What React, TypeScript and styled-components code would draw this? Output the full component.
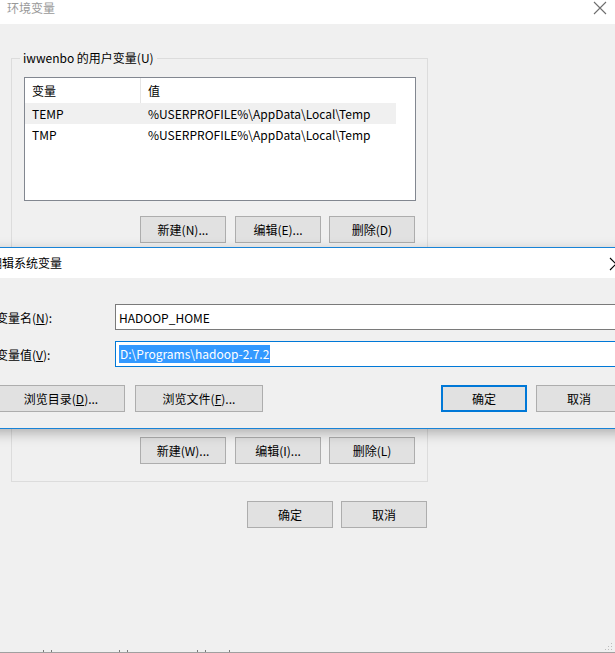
import React from 'react';
import styled, { createGlobalStyle } from 'styled-components';

const GlobalStyle = createGlobalStyle`
  html, body {
    margin: 0;
    padding: 0;
    background: #f0f0f0;
    overflow: hidden;
  }
  * {
    box-sizing: border-box;
  }
`;

const FONT = '"Microsoft YaHei", "Noto Sans CJK SC", sans-serif';

const Window = styled.div`
  position: relative;
  width: 615px;
  height: 653px;
  display: flex;
  flex-direction: column;
  background: #f0f0f0;
  font-family: ${FONT};
  font-size: 12px;
  color: #000;
  overflow: hidden;
`;

const TitleBar = styled.div<{ $active?: boolean }>`
  height: ${({ $active }) => ($active ? '30px' : '24px')};
  flex-shrink: 0;
  display: flex;
  align-items: ${({ $active }) => ($active ? 'center' : 'flex-start')};
  justify-content: space-between;
  padding: ${({ $active }) => ($active ? '0 0 0 7px' : '0 8px 0 7px')};
  background: #fff;
  color: ${({ $active }) => ($active ? '#000' : '#999')};
  line-height: 16px;
`;

const CloseBox = styled.span<{ $right?: number }>`
  display: block;
  padding-top: 1px;
  padding-right: ${({ $right }) => $right ?? 0}px;
`;

const CloseGlyph = styled.svg`
  display: block;
`;

const Body = styled.div`
  flex: 1;
  display: flex;
  flex-direction: column;
  padding: 26px 0 0 11px;
`;

const Column = styled.div`
  width: 417px;
  display: flex;
  flex-direction: column;
`;

const GroupBox = styled.fieldset<{ $padBottom: number; $gapTop?: number }>`
  margin: ${({ $gapTop }) => $gapTop ?? 0}px 0 0 0;
  padding: 11px 12px ${({ $padBottom }) => $padBottom}px 12px;
  border: 1px solid #dcdcdc;
  min-width: 0;
  display: flex;
  flex-direction: column;
`;

const Legend = styled.legend`
  padding: 0 3px;
  margin-left: -4px;
  line-height: 16px;
  font-size: 12px;
`;

const ListBox = styled.div<{ $height: number }>`
  height: ${({ $height }) => $height}px;
  margin-right: -1px;
  border: 1px solid #828790;
  background: #fff;
  padding-right: 19px;
`;

const ListHeader = styled.div`
  display: grid;
  grid-template-columns: 116px 1fr;
  height: 25px;
  align-items: center;
`;

const HeaderCell = styled.div<{ $divider?: boolean }>`
  height: 100%;
  display: flex;
  align-items: center;
  padding-left: 7px;
  border-right: ${({ $divider }) => ($divider ? '1px solid #e5e5e5' : 'none')};
`;

const ListRow = styled.div<{ $selected?: boolean }>`
  display: grid;
  grid-template-columns: 116px 1fr;
  height: 21px;
  align-items: center;
  background: ${({ $selected }) => ($selected ? '#f0f0f0' : 'transparent')};
`;

const Cell = styled.div`
  padding-left: 7px;
  white-space: nowrap;
`;

const ButtonRow = styled.div<{ $top: number; $right?: number }>`
  display: flex;
  justify-content: flex-end;
  gap: 8px;
  margin-top: ${({ $top }) => $top}px;
  padding-right: ${({ $right }) => $right ?? 0}px;
`;

const Button = styled.button<{ $width?: number; $default?: boolean }>`
  width: ${({ $width }) => $width ?? 86}px;
  height: 27px;
  flex-shrink: 0;
  margin: 0;
  padding: 0;
  font-family: ${FONT};
  font-size: 12px;
  color: #000;
  background: #e1e1e1;
  border: ${({ $default }) => ($default ? '2px solid #0078d7' : '1px solid #adadad')};
  border-radius: 0;
  line-height: 16px;
`;

const Underline = styled.span`
  text-decoration: underline;
`;

/* edit dialog floating over the main window */
const Dialog = styled.div`
  position: absolute;
  top: 247px;
  left: -18px;
  width: 658px;
  display: flex;
  flex-direction: column;
  border: 1px solid #1883d7;
  background: #f0f0f0;
  box-shadow: 0 4px 12px rgba(0, 0, 0, 0.28);
`;

const DialogBody = styled.div`
  display: flex;
  flex-direction: column;
  padding: 26px 13px 16px 13px;
`;

const Field = styled.div<{ $top?: number }>`
  display: grid;
  grid-template-columns: 119px 1fr;
  align-items: center;
  margin-top: ${({ $top }) => $top ?? 0}px;
`;

const TextBox = styled.div<{ $focused?: boolean }>`
  height: 26px;
  display: flex;
  align-items: center;
  padding-left: 3px;
  background: #fff;
  border: 1px solid ${({ $focused }) => ($focused ? '#0078d7' : '#7a7a7a')};
  white-space: nowrap;
`;

const Selection = styled.span`
  background: #3399ff;
  color: #fff;
  padding: 0 1px 1px 1px;
  line-height: 17px;
`;

const DialogButtons = styled.div`
  display: flex;
  align-items: center;
  gap: 10px;
  margin-top: 18px;
  padding-left: 1px;
  padding-right: 4px;
`;

const Spacer = styled.div`
  flex: 1;
`;

const Footer = styled.div`
  margin-top: auto;
  height: 3px;
  display: flex;
  border-bottom: 1px solid #a0a0a0;
`;

const FooterTick = styled.div<{ $width: number }>`
  width: ${({ $width }) => $width}px;
  border-right: 1px solid #7a7a7a;
`;

const Grip = styled.svg`
  position: absolute;
  right: 2px;
  bottom: 2px;
`;

const CloseIcon: React.FC<{ color: string }> = ({ color }) => (
  <CloseGlyph width="14" height="14" viewBox="0 0 14 14">
    <path d="M1 1 L13 13 M13 1 L1 13" stroke={color} strokeWidth="1.1" fill="none" />
  </CloseGlyph>
);

const userVars = [
  { name: 'TEMP', value: '%USERPROFILE%\\AppData\\Local\\Temp' },
  { name: 'TMP', value: '%USERPROFILE%\\AppData\\Local\\Temp' },
];

export default function App() {
  return (
    <Window>
      <GlobalStyle />
      <TitleBar>
        <span>环境变量</span>
        <CloseBox>
          <CloseIcon color="#6e6e6e" />
        </CloseBox>
      </TitleBar>

      <Body>
        <Column>
          <GroupBox $padBottom={10}>
            <Legend>iwwenbo 的用户变量(U)</Legend>
            <ListBox $height={124}>
              <ListHeader>
                <HeaderCell $divider>变量</HeaderCell>
                <HeaderCell>值</HeaderCell>
              </ListHeader>
              {userVars.map((v, i) => (
                <ListRow key={v.name} $selected={i === 0}>
                  <Cell>{v.name}</Cell>
                  <Cell>{v.value}</Cell>
                </ListRow>
              ))}
            </ListBox>
            <ButtonRow $top={15}>
              <Button style={{ marginRight: 1 }}>新建(N)...</Button>
              <Button>编辑(E)...</Button>
              <Button>删除(D)</Button>
            </ButtonRow>
          </GroupBox>

          <GroupBox $padBottom={17} $gapTop={6}>
            <Legend>系统变量(S)</Legend>
            <ListBox $height={135} />
            <ButtonRow $top={15}>
              <Button style={{ marginRight: 1 }}>新建(W)...</Button>
              <Button>编辑(I)...</Button>
              <Button>删除(L)</Button>
            </ButtonRow>
          </GroupBox>

          <ButtonRow $top={19} $right={1}>
            <Button>确定</Button>
            <Button>取消</Button>
          </ButtonRow>
        </Column>
      </Body>

      <Footer>
        <FooterTick $width={44} />
        <FooterTick $width={8} />
        <FooterTick $width={68} />
        <FooterTick $width={8} />
        <FooterTick $width={70} />
        <FooterTick $width={8} />
        <FooterTick $width={24} />
      </Footer>
      <Grip width="8" height="8" viewBox="0 0 8 8">
        <rect x="6" y="0" width="1" height="1" fill="#bcbcbc" />
        <rect x="3" y="3" width="1" height="1" fill="#bcbcbc" />
        <rect x="6" y="3" width="1" height="1" fill="#bcbcbc" />
        <rect x="0" y="6" width="1" height="1" fill="#bcbcbc" />
        <rect x="3" y="6" width="1" height="1" fill="#bcbcbc" />
        <rect x="6" y="6" width="1" height="1" fill="#bcbcbc" />
      </Grip>

      <Dialog>
        <TitleBar $active>
          <span>编辑系统变量</span>
          <CloseBox $right={16}>
            <CloseIcon color="#000" />
          </CloseBox>
        </TitleBar>
        <DialogBody>
          <Field>
            <span>
              变量名(<Underline>N</Underline>):
            </span>
            <TextBox>HADOOP_HOME</TextBox>
          </Field>
          <Field $top={11}>
            <span>
              变量值(<Underline>V</Underline>):
            </span>
            <TextBox $focused>
              <Selection>D:\Programs\hadoop-2.7.2</Selection>
            </TextBox>
          </Field>
          <DialogButtons>
            <Button $width={128}>
              浏览目录(<Underline>D</Underline>)...
            </Button>
            <Button $width={128}>
              浏览文件(<Underline>F</Underline>)...
            </Button>
            <Spacer />
            <Button $default>确定</Button>
            <Button style={{ marginLeft: -1 }}>取消</Button>
          </DialogButtons>
        </DialogBody>
      </Dialog>
    </Window>
  );
}
